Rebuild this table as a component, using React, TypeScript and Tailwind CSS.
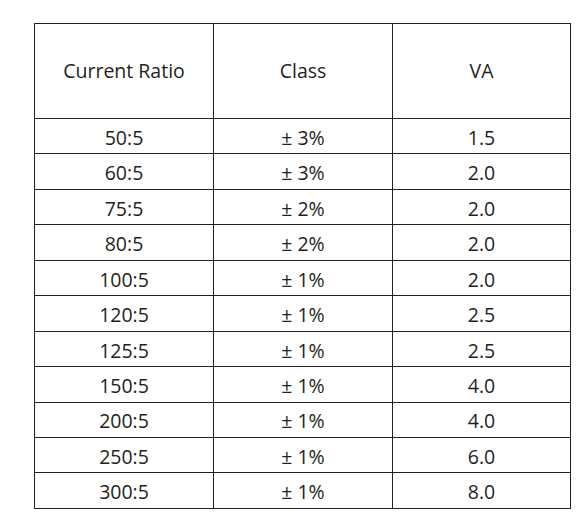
const rows: [string, string, string][] = [
  ["50:5", "± 3%", "1.5"],
  ["60:5", "± 3%", "2.0"],
  ["75:5", "± 2%", "2.0"],
  ["80:5", "± 2%", "2.0"],
  ["100:5", "± 1%", "2.0"],
  ["120:5", "± 1%", "2.5"],
  ["125:5", "± 1%", "2.5"],
  ["150:5", "± 1%", "4.0"],
  ["200:5", "± 1%", "4.0"],
  ["250:5", "± 1%", "6.0"],
  ["300:5", "± 1%", "8.0"],
];

export default function App() {
  return (
    <div className="w-[580px] h-[518px] bg-white pt-[23px] pl-[34px] font-['Open_Sans',sans-serif] text-[#231f20]">
      <table className="w-[537px] table-fixed border-collapse text-[19.5px]">
        <thead>
          <tr className="h-[95px]">
            <th className="w-[179px] border-[1.5px] border-[#231f20] font-normal text-center">Current Ratio</th>
            <th className="w-[179px] border-[1.5px] border-[#231f20] font-normal text-center">Class</th>
            <th className="border-[1.5px] border-[#231f20] font-normal text-center">VA</th>
          </tr>
        </thead>
        <tbody>
          {rows.map(([ratio, cls, va]) => (
            <tr key={ratio} className="h-[35.45px]">
              <td className="border-[1.5px] border-[#231f20] text-center pt-[3px] leading-none">{ratio}</td>
              <td className="border-[1.5px] border-[#231f20] text-center pt-[3px] leading-none">{cls}</td>
              <td className="border-[1.5px] border-[#231f20] text-center pt-[3px] leading-none">{va}</td>
            </tr>
          ))}
        </tbody>
      </table>
    </div>
  );
}
